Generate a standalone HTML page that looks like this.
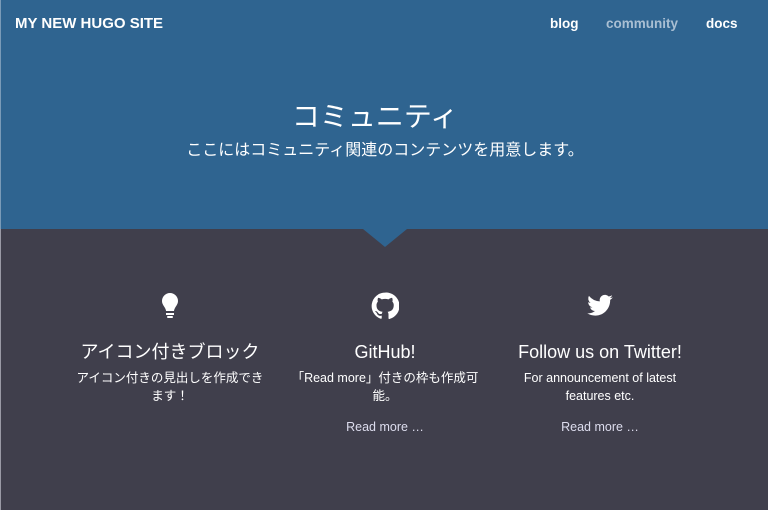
<!DOCTYPE html>
<html><head><meta charset="utf-8"><style>
*{margin:0;padding:0;box-sizing:border-box}
body{width:768px;height:526px;overflow:hidden;background:#fff;font-family:"Liberation Sans","Noto Sans CJK JP",sans-serif;color:#fff}
.top{position:absolute;left:0;top:0;width:768px;height:229px;background:#2f6490;border-left:1px solid #7a9bb8}
.logo{position:absolute;left:14px;top:15px;font-weight:bold;font-size:15px}
.nav{position:absolute;top:16px;font-weight:bold;font-size:13.5px}
h1{position:absolute;top:95px;left:-10px;width:768px;text-align:center;font-weight:normal;font-size:28px}
.sub{position:absolute;top:136px;width:768px;text-align:center;font-size:16px}
.dark{position:absolute;left:0;top:229px;width:768px;height:281px;background:#403f4c;border-left:1px solid #9a9aa5}
.tri{position:absolute;left:363px;top:229px;width:0;height:0;border-left:22px solid transparent;border-right:22px solid transparent;border-top:18px solid #2f6490}
.col{position:absolute;top:292px;width:220px;text-align:center}
.col svg{display:block;margin:0 auto;height:28px}
.col h3{font-weight:normal;font-size:18px;margin-top:20px;line-height:24px}
.col p{font-size:12.5px;line-height:18px;margin-top:5px;padding:0 18px}
.col p.j{padding:0 14px}
.col .rm{margin-top:13px;color:#dde}
</style></head><body>
<div class="top">
<div class="logo">MY NEW HUGO SITE</div>
<div class="nav" style="left:549px">blog</div>
<div class="nav" style="left:605px;color:#a9bfd3">community</div>
<div class="nav" style="left:705px">docs</div>
<h1>コミュニティ</h1>
<div class="sub">ここにはコミュニティ関連のコンテンツを用意します。</div>
</div>
<div class="dark"></div>
<div class="tri"></div>
<div class="col" style="left:60px">
<svg viewBox="0 0 24 28" width="24"><path d="M12 1a8 8 0 0 0-8 8c0 3 2 5 3 7 .5 1 1 2 1 3h8c0-1 .5-2 1-3 1-2 3-4 3-7a8 8 0 0 0-8-8z" fill="#fff"/><rect x="8" y="21" width="8" height="2" fill="#fff"/><rect x="9" y="24" width="6" height="2" rx="1" fill="#fff"/></svg>
<h3>アイコン付きブロック</h3>
<p class="j">アイコン付きの見出しを作成でき<br>ます！</p>
</div>
<div class="col" style="left:275px">
<svg viewBox="0 0 24 24" width="28"><path fill="#fff" d="M12 .5a11.5 11.5 0 0 0-3.6 22.4c.6.1.8-.2.8-.6v-2c-3.2.7-3.9-1.5-3.9-1.5-.5-1.3-1.3-1.7-1.3-1.7-1-.7.1-.7.1-.7 1.2.1 1.8 1.2 1.8 1.2 1 1.8 2.7 1.3 3.4 1 .1-.8.4-1.3.7-1.6-2.6-.3-5.3-1.3-5.3-5.7 0-1.3.5-2.3 1.2-3.1-.1-.3-.5-1.5.1-3.1 0 0 1-.3 3.2 1.2a11 11 0 0 1 5.8 0c2.2-1.5 3.2-1.2 3.2-1.2.6 1.6.2 2.8.1 3.1.8.8 1.2 1.8 1.2 3.1 0 4.4-2.7 5.4-5.3 5.7.4.4.8 1.1.8 2.2v3.3c0 .3.2.7.8.6A11.5 11.5 0 0 0 12 .5z"/></svg>
<h3>GitHub!</h3>
<p class="j">「Read more」付きの枠も作成可<br>能。</p>
<p class="rm">Read more …</p>
</div>
<div class="col" style="left:490px">
<svg viewBox="0 0 24 24" width="28"><path fill="#fff" d="M23 4.6c-.8.4-1.7.6-2.6.7a4.5 4.5 0 0 0 2-2.5c-.9.5-1.9.9-2.9 1.1a4.5 4.5 0 0 0-7.7 4.1A12.8 12.8 0 0 1 2.5 3.3a4.5 4.5 0 0 0 1.4 6c-.7 0-1.4-.2-2-.6 0 2.2 1.5 4 3.6 4.4-.7.2-1.4.2-2 .1.6 1.8 2.2 3.1 4.2 3.1A9 9 0 0 1 1 18.2c2 1.3 4.4 2 6.9 2 8.3 0 12.8-6.9 12.8-12.8v-.6c.9-.6 1.6-1.4 2.3-2.2z"/></svg>
<h3>Follow us on Twitter!</h3>
<p>For announcement of latest features etc.</p>
<p class="rm">Read more …</p>
</div>
</body></html>
